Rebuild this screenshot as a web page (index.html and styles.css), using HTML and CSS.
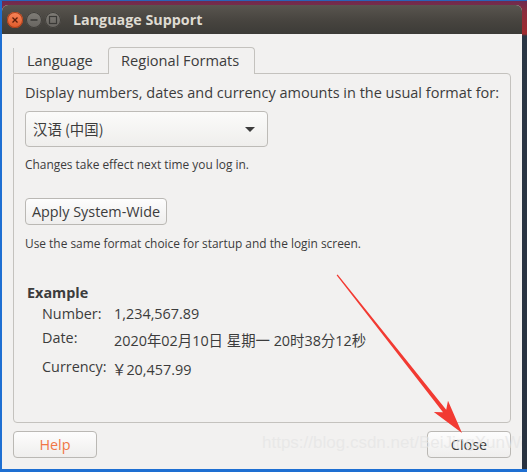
FILE: index.html
```html
<!DOCTYPE html>
<html>
<head>
<meta charset="utf-8">
<link rel="stylesheet" href="styles.css">
</head>
<body>
<div class="desktop">
  <div class="frame">
    <div class="window">
      <div class="titlebar">
        <div class="wbtns">
          <span class="wbtn close"><svg width="16" height="16" viewBox="0 0 16 16"><path d="M5.5 5.5 L10.5 10.5 M10.5 5.5 L5.5 10.5" stroke="#5a1d0a" stroke-width="1.3"/></svg></span>
          <span class="wbtn"><svg width="16" height="16" viewBox="0 0 16 16"><path d="M4.5 8 H11.5" stroke="#3a3936" stroke-width="1.4"/></svg></span>
          <span class="wbtn"><svg width="16" height="16" viewBox="0 0 16 16"><rect x="4.5" y="4.5" width="7" height="7" fill="none" stroke="#3a3936" stroke-width="1.2"/></svg></span>
        </div>
        <div class="title">Language Support</div>
      </div>
      <div class="body">
        <div class="notebook">
          <div class="tabs">
            <div class="tab">Language</div>
            <div class="tab active">Regional Formats</div>
          </div>
          <div class="panel">
            <div class="lead">Display numbers, dates and currency amounts in the usual format for:</div>
            <div class="combo"><span class="combo-text">汉语 (中国)</span><span class="caret"></span></div>
            <div class="note">Changes take effect next time you log in.</div>
            <div class="btn apply">Apply System-Wide</div>
            <div class="note note2">Use the same format choice for startup and the login screen.</div>
            <div class="example">
              <div class="ex-title">Example</div>
              <div class="ex-grid">
                <div class="lbl r1">Number:</div><div class="val r1">1,234,567.89</div>
                <div class="lbl r2">Date:</div><div class="val r2 cjk dval">2020年02月10日 星期一 20时38分12秒</div>
                <div class="lbl r3">Currency:</div><div class="val r3 cval">￥20,457.99</div>
              </div>
            </div>
          </div>
        </div>
        <div class="actions">
          <div class="btn help">Help</div>
          <div class="btn closeb">Close</div>
        </div>
      </div>
      <div class="watermark">https://blog.csdn.net/BeiJingXunWei</div>
      <svg class="arrow" width="520" height="464" viewBox="0 0 520 464">
        <polygon points="335.6,269.6 444.2,404.8 446.0,395.7 460,428 431.8,406.9 441.0,407.2 334.6,270.3" fill="#f23a32"/>
      </svg>
    </div>
  </div>
</div>
</body>
</html>
```
FILE: styles.css
```css
* { box-sizing: border-box; }
html, body { margin: 0; padding: 0; }
body {
  width: 527px; height: 472px; overflow: hidden;
  font-family: "Open Sans", "Noto Sans", "Noto Sans CJK SC", sans-serif;
  color: #3c3c3c;
}
.desktop {
  width: 527px; height: 472px;
  background: linear-gradient(180deg, #6b2a52 0px, #8b2d3c 12px, #a02a2e 34px, #2b3644 36px, #283240 100%);
  display: flex;
}
.frame {
  border-left: 2px solid #1e6fd2;
  border-top: 1px solid #2a62b8;
  border-bottom: 3px solid #1e6fd2;
  width: 527px; height: 472px;
  padding-top: 4px;
}
.window {
  position: relative;
  width: 520px; height: 464px;
  background: #f2f1f0;
  border-radius: 6px 6px 0 0;
  overflow: hidden;
  display: flex; flex-direction: column;
}
.titlebar {
  height: 29px;
  background: linear-gradient(180deg, #59554f 0%, #47443f 55%, #3c3b37 100%);
  display: flex; align-items: center;
  padding-left: 5px;
}
.wbtns { display: flex; gap: 3px; }
.wbtn {
  width: 16px; height: 16px; border-radius: 50%;
  background: linear-gradient(180deg, #807d77, #67645f);
  box-shadow: inset 0 0 0 1px #3f3d39;
  display: flex;
}
.wbtn.close { background: linear-gradient(180deg, #f7855a, #e05a2a); box-shadow: inset 0 0 0 1px #a8401c; }
.title {
  margin-left: 12px;
  color: #dfdbd2;
  font-weight: 700;
  font-size: 14.3px;
}
.body { flex: 1; display: flex; flex-direction: column; padding: 12px 11px 0 11px; }
.notebook { display: flex; flex-direction: column; }
.tabs { display: flex; height: 27px; align-items: flex-end; }
.tab {
  height: 25px; padding: 0 0 0 13px;
  font-size: 14.6px; color: #3c3c3c;
  border-left: 1px solid #c9c7c4;
  display: flex; align-items: center; padding-bottom: 1px;
  width: 95px;
}
.tab.active {
  height: 27px; width: 147px;
  border: 1px solid #c4c2be; border-bottom: none;
  border-radius: 4px 4px 0 0;
  padding-left: 12px; padding-bottom: 2px;
  background: #f2f1f0;
  margin-bottom: -1px; position: relative; z-index: 1;
}
.panel {
  width: 498px; height: 350px;
  border: 1px solid #c4c2be;
  border-radius: 0 4px 4px 4px;
  padding: 9px 11px 0 11px;
}
.lead { font-size: 14.5px; color: #3c3c3c; white-space: nowrap; }
.combo {
  margin-top: 9px;
  width: 243px; height: 36px;
  border: 1px solid #bdbbb7; border-radius: 4px;
  background: linear-gradient(180deg, #fbfbfa, #efeeec);
  display: flex; align-items: center; justify-content: space-between;
  padding: 0 10px 2px 7px;
  font-family: "Noto Sans CJK SC", sans-serif; font-size: 14.4px; color: #3c3c3c;
}
.caret { width: 0; height: 0; border-left: 5px solid transparent; border-right: 5px solid transparent; border-top: 5px solid #3c3c3c; margin-right: 2px; margin-top: 2px; }
.note { font-size: 11.9px; margin-top: 9px; color: #3c3c3c; white-space: nowrap; }
.btn {
  border: 1px solid #bab8b4; border-radius: 4px;
  background: linear-gradient(180deg, #fdfdfd, #efeeed);
  display: flex; align-items: center; justify-content: center;
  font-size: 14.4px; color: #3c3c3c; height: 27px;
}
.apply { margin-top: 26px; width: 142px; }
.note2 { margin-top: 10px; }
.example { margin-top: 32px; padding-left: 2px; }
.ex-title { font-weight: 700; font-size: 14.4px; color: #3c3c3c; }
.ex-grid {
  display: grid; grid-template-columns: 72px auto;
  margin-left: 15px; margin-top: 2px;
  font-size: 14.4px;
}
.lbl, .val { line-height: 20px; white-space: nowrap; }
.r1 { height: 24px; }
.r2 { height: 29px; }
.r3 { height: 24px; }
.cjk { font-family: "Open Sans", "Noto Sans CJK SC", sans-serif; font-size: 14.4px; }
.dval { padding-top: 3px; }
.cval { padding-top: 3px; margin-left: -2px; }
.actions { display: flex; justify-content: space-between; margin-top: 8px; }
.help { width: 84px; height: 27px; color: #f07746; }
.closeb { width: 84px; height: 27px; }
.watermark {
  position: absolute; left: 260px; top: 428px;
  font-family: "Liberation Sans", sans-serif; font-size: 17px;
  color: rgba(228, 228, 228, 0.7);
  white-space: nowrap; pointer-events: none;
}
.arrow { position: absolute; left: 0; top: 0; pointer-events: none; }
```
